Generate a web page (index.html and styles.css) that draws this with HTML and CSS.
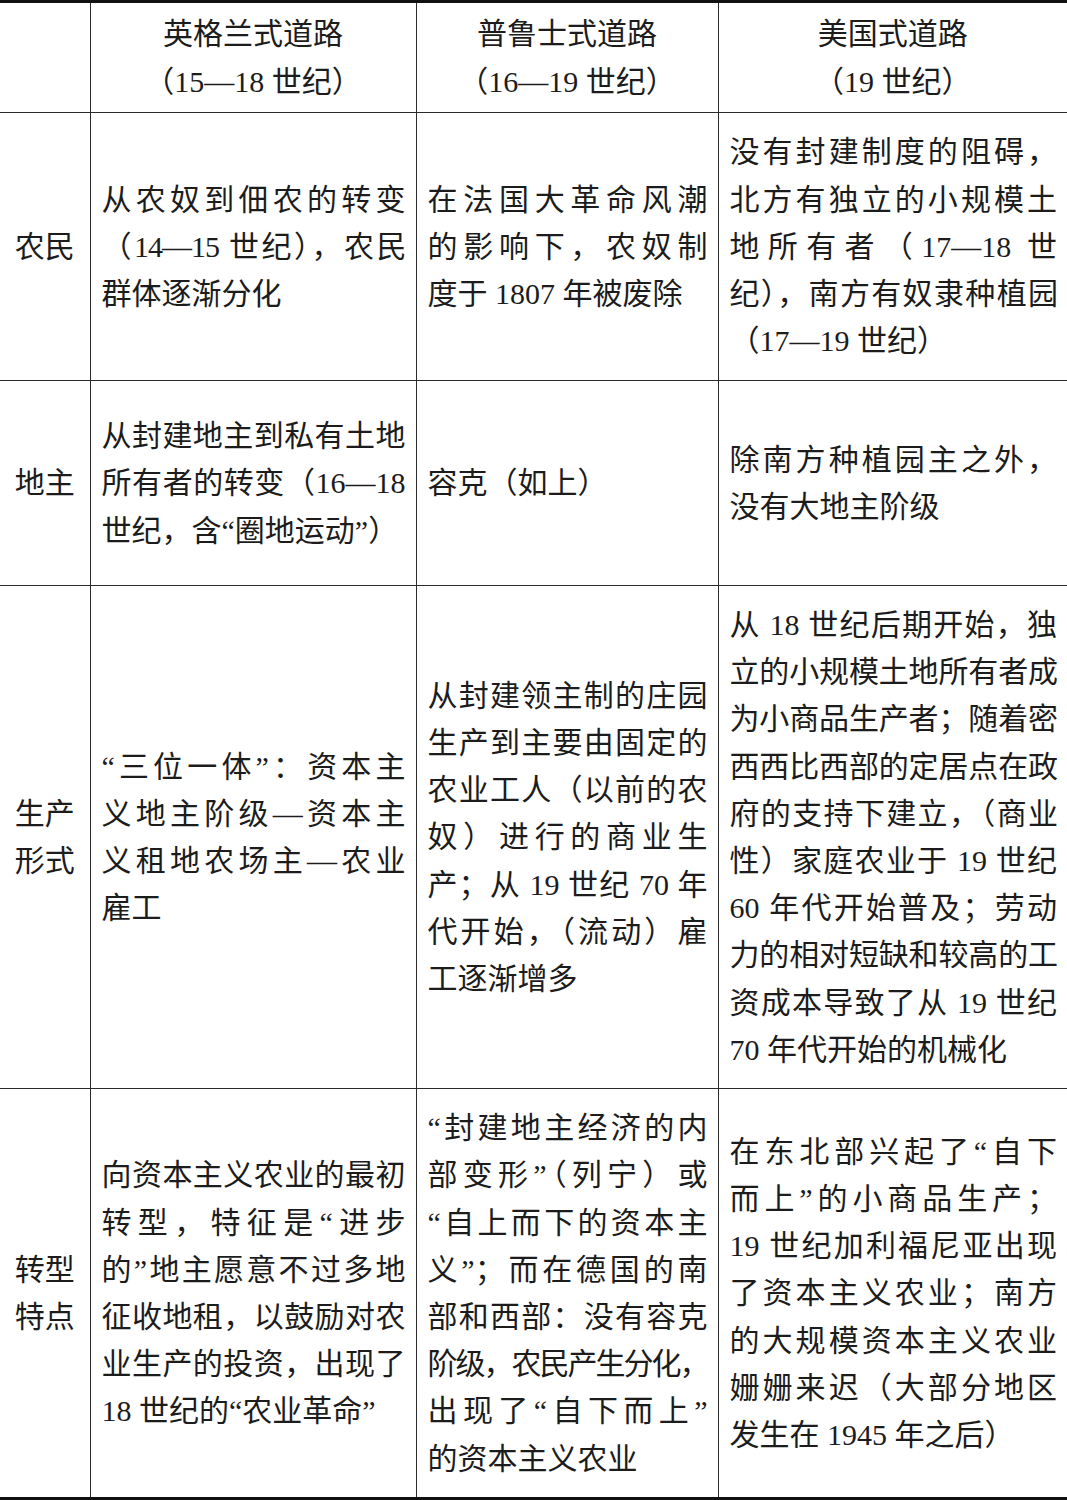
FILE: index.html
```html
<!DOCTYPE html>
<html lang="zh-CN">
<head>
<meta charset="utf-8">
<title>农业转型道路比较</title>
<link rel="stylesheet" href="styles.css">
</head>
<body>
<table class="cmp">
  <colgroup>
    <col class="c1"><col class="c2"><col class="c3"><col class="c4">
  </colgroup>
  <tr class="r-head">
    <td class="lab"></td>
    <td class="head">英格兰式道路<br>（15—18 世纪）</td>
    <td class="head">普鲁士式道路<br>（16—19 世纪）</td>
    <td class="head">美国式道路<br>（19 世纪）</td>
  </tr>
  <tr class="r-1">
    <td class="lab">农民</td>
    <td><span class="ln">从农奴到佃农的转变</span><span class="ln t1">（14—15 世纪），农民</span><span class="end">群体逐渐分化</span></td>
    <td><span class="ln">在法国大革命风潮</span><span class="ln">的影响下，农奴制</span><span class="end">度于 1807 年被废除</span></td>
    <td><span class="ln">没有封建制度的阻碍，</span><span class="ln">北方有独立的小规模土</span><span class="ln">地所有者（17—18 世</span><span class="ln t1">纪），南方有奴隶种植园</span><span class="end">（17—19 世纪）</span></td>
  </tr>
  <tr class="r-2">
    <td class="lab">地主</td>
    <td><span class="ln">从封建地主到私有土地</span><span class="ln">所有者的转变（16—18</span><span class="end">世纪，含“圈地运动”）</span></td>
    <td><span class="end">容克（如上）</span></td>
    <td><span class="ln">除南方种植园主之外，</span><span class="end">没有大地主阶级</span></td>
  </tr>
  <tr class="r-3">
    <td class="lab">生产<br>形式</td>
    <td><span class="ln">“三位一体”：资本主</span><span class="ln">义地主阶级—资本主</span><span class="ln">义租地农场主—农业</span><span class="end">雇工</span></td>
    <td><span class="ln">从封建领主制的庄园</span><span class="ln">生产到主要由固定的</span><span class="ln">农业工人（以前的农</span><span class="ln">奴）进行的商业生</span><span class="ln">产；从 19 世纪 70 年</span><span class="ln">代开始，（流动）雇</span><span class="end">工逐渐增多</span></td>
    <td><span class="ln">从 18 世纪后期开始，独</span><span class="ln t1">立的小规模土地所有者成</span><span class="ln t1">为小商品生产者；随着密</span><span class="ln t1">西西比西部的定居点在政</span><span class="ln t1">府的支持下建立，（商业</span><span class="ln">性）家庭农业于 19 世纪</span><span class="ln">60 年代开始普及；劳动</span><span class="ln t1">力的相对短缺和较高的工</span><span class="ln">资成本导致了从 19 世纪</span><span class="end">70 年代开始的机械化</span></td>
  </tr>
  <tr class="r-4">
    <td class="lab">转型<br>特点</td>
    <td><span class="ln">向资本主义农业的最初</span><span class="ln">转型，特征是“进步</span><span class="ln">的”地主愿意不过多地</span><span class="ln">征收地租，以鼓励对农</span><span class="ln">业生产的投资，出现了</span><span class="end">18 世纪的“农业革命”</span></td>
    <td><span class="ln">“封建地主经济的内</span><span class="ln">部变形”（列宁）或</span><span class="ln">“自上而下的资本主</span><span class="ln">义”；而在德国的南</span><span class="ln">部和西部：没有容克</span><span class="ln t2">阶级，农民产生分化，</span><span class="ln">出现了“自下而上”</span><span class="end">的资本主义农业</span></td>
    <td><span class="ln">在东北部兴起了“自下</span><span class="ln">而上”的小商品生产；</span><span class="ln">19 世纪加利福尼亚出现</span><span class="ln">了资本主义农业；南方</span><span class="ln">的大规模资本主义农业</span><span class="ln">姗姗来迟（大部分地区</span><span class="end">发生在 1945 年之后）</span></td>
  </tr>
</table>
</body>
</html>
```
FILE: styles.css
```css
html, body {
  margin: 0;
  padding: 0;
  background: #ffffff;
}

.cmp {
  width: 1067px;
  border-collapse: collapse;
  table-layout: fixed;
  font-family: "Liberation Serif", "Noto Sans CJK SC", serif;
  font-size: 30px;
  line-height: 47.2px;
  color: #1c1c1c;
}

.c1 { width: 90px; }
.c2 { width: 326px; }
.c3 { width: 302px; }
.c4 { width: 349px; }

.cmp td {
  border: 1.5px solid #2b2b2b;
  padding: 0 10px 0 11px;
  vertical-align: middle;
  text-align: justify;
}

.cmp td:first-child { border-left: none; }
.cmp td:last-child { border-right: none; }

.r-head td { border-top: 3px solid #111; }
.r-4 td { border-bottom: 5px solid #111; }

.r-head { height: 111px; }
.r-1 { height: 268px; }
.r-2 { height: 205px; }
.r-3 { height: 503px; }
.r-4 { height: 411px; }

.cmp td.head {
  text-align: center;
  padding: 0;
}

.cmp td.lab {
  text-align: center;
  padding: 0;
}

.ln {
  display: block;
  text-align: justify;
  text-align-last: justify;
}

.end {
  display: block;
  text-align: left;
  text-align-last: left;
}

.t1 { letter-spacing: -1px; }
.t2 { letter-spacing: -2px; }
```
